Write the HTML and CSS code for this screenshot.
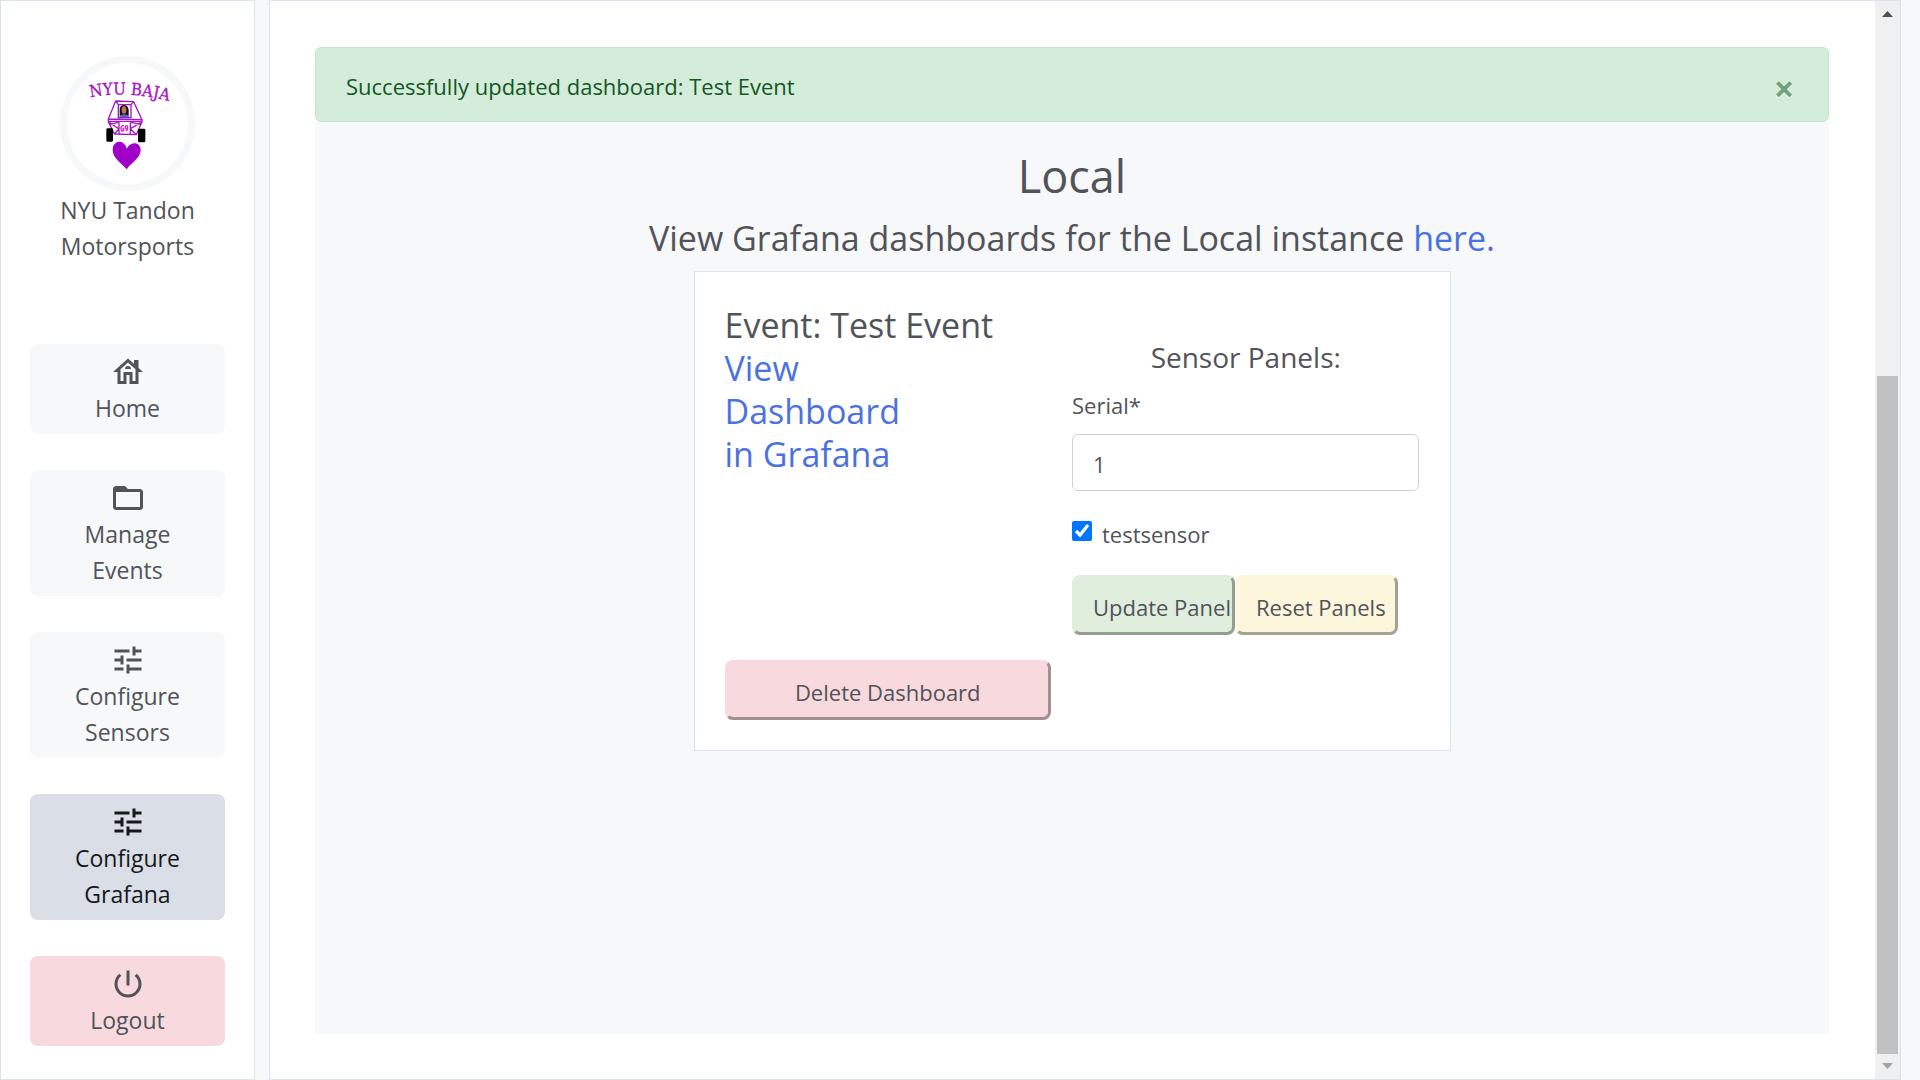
FILE: index.html
```html
<!DOCTYPE html>
<html lang="en">
<head>
<meta charset="utf-8">
<title>Configure Grafana</title>
<link rel="stylesheet" href="styles.css">
</head>
<body>
<div class="app">
  <aside class="sidebar">
    <div class="brand">
      <svg class="logo" viewBox="30 17 405 405" role="img" aria-label="NYU Baja">
        <circle cx="232.500" cy="219.500" r="192" fill="#fff" stroke="#f6f8fa" stroke-width="21"/>
        <path id="arc" d="M121 141Q235 118 370 156" fill="none"/>
        <text class="logo-text"><textPath href="#arc">NYU BAJA</textPath></text>
        <g fill="none" stroke="#a415c4" stroke-width="4" stroke-linejoin="round">
          <path d="M197 152L251 154L276 208L175 206ZM205 163H243V202H205ZM197 152L205 163M251 154L243 163M175 206V214L193 251L259 253L276 214V208M175 213H276M178 216L207 236L193 251M274 216L241 235L259 253M207 216V252M241 216V252M180 222L205 216M271 222L243 216"/>
        </g>
        <path d="M209 196V175Q211 164 222 164Q235 165 236 180V196Z" fill="#160d12"/>
        <ellipse cx="222" cy="179" rx="7" ry="11" fill="#b57955"/>
        <path d="M207 201Q211 192 222 192Q235 192 238 201Z" fill="#5663ae"/>
        <path d="M222 226Q212 224 213 236Q214 243 219 242Q224 236 217 234M233 236Q225 237 226 229Q230 223 233 229Q234 238 229 243" fill="none" stroke="#ff10bd" stroke-width="4"/>
        <rect x="169" y="234" width="20" height="40" rx="4"/>
        <rect x="264" y="235" width="22" height="41" rx="4"/>
        <path d="M230 357C214 337 188 323 188 298C188 278 207 267 222 280Q229 286 230 295Q239 280 252 279C265 279 272 287 272 300C271 324 244 337 230 357Z" fill="#a000c8"/>
      </svg>
      <div>NYU Tandon<br>Motorsports</div>
    </div>
    <nav class="nav">
      <a class="nav-item" href="#">
        <svg class="icon" viewBox="0 0 24 24"><path fill-rule="evenodd" d="M19 9.300V4h-3v2.600L12 3 2 12h3v8h6v-6h2v6h6v-8h3zM17 18h-2v-6H9v6H7v-7.810l5-4.500 5 4.500zM10 10h4q0-2-2-2t-2 2z"/></svg>
        <span>Home</span>
      </a>
      <a class="nav-item" href="#">
        <svg class="icon" viewBox="0 0 24 24"><path d="M20 6h-8l-2-2H4c-1.100 0-1.990.9-1.990 2L2 18c0 1.100.9 2 2 2h16c1.100 0 2-.9 2-2V8c0-1.100-.9-2-2-2zm0 12H4V8h16v10z"/></svg>
        <span>Manage<br>Events</span>
      </a>
      <a class="nav-item" href="#">
        <svg class="icon" viewBox="0 0 24 24"><path d="M3 17v2h6v-2H3zM3 5v2h10V5H3zm10 16v-2h8v-2h-8v-2h-2v6h2zM7 9v2H3v2h4v2h2V9H7zm14 4v-2H11v2h10zm-6-4h2V7h4V5h-4V3h-2v6z"/></svg>
        <span>Configure<br>Sensors</span>
      </a>
      <a class="nav-item active" href="#" aria-current="page">
        <svg class="icon" viewBox="0 0 24 24"><path d="M3 17v2h6v-2H3zM3 5v2h10V5H3zm10 16v-2h8v-2h-8v-2h-2v6h2zM7 9v2H3v2h4v2h2V9H7zm14 4v-2H11v2h10zm-6-4h2V7h4V5h-4V3h-2v6z"/></svg>
        <span>Configure<br>Grafana</span>
      </a>
      <a class="nav-item danger" href="#">
        <svg class="icon" viewBox="0 0 24 24"><path d="M13 3h-2v10h2V3zm4.830 2.170l-1.420 1.420C17.990 7.860 19 9.810 19 12c0 3.870-3.130 7-7 7s-7-3.130-7-7c0-2.190 1.010-4.140 2.580-5.420L6.170 5.170C4.230 6.820 3 9.260 3 12c0 4.970 4.030 9 9 9s9-4.030 9-9c0-2.740-1.230-5.180-3.170-6.830z"/></svg>
        <span>Logout</span>
      </a>
    </nav>
  </aside>

  <div class="frame">
    <main class="content">
      <div class="alert" role="alert">
        <span>Successfully updated dashboard: Test Event</span>
        <button class="close" type="button" aria-label="Close">×</button>
      </div>
      <section class="panel">
        <h1 class="title">Local</h1>
        <h2 class="heading">View Grafana dashboards for the Local instance <a href="#">here.</a></h2>
        <div class="card">
          <div class="event">
            <h2 class="heading">Event: Test Event</h2>
            <h2 class="heading"><a href="#">View<br>Dashboard<br>in Grafana</a></h2>
            <button class="btn btn-delete" type="button">Delete Dashboard</button>
          </div>
          <form class="sensors">
            <h3 class="subheading">Sensor Panels:</h3>
            <label class="field-label" for="serial">Serial*</label>
            <input class="field" id="serial" type="text" value="1">
            <div class="check">
              <input class="checkbox" id="testsensor" type="checkbox" checked>
              <label for="testsensor">testsensor</label>
            </div>
            <div class="actions">
              <button class="btn btn-update" type="button">Update Panels</button>
              <button class="btn btn-reset" type="button">Reset Panels</button>
            </div>
          </form>
        </div>
      </section>
    </main>
    <div class="scrollbar" aria-hidden="true">
      <svg class="arrow" viewBox="0 0 11 6"><path d="M0 6L5.500 0L11 6Z" fill="#505050"/></svg>
      <div class="track"><div class="thumb"></div></div>
      <svg class="arrow" viewBox="0 0 11 6"><path d="M0 0L5.500 6L11 0Z" fill="#a3a3a3"/></svg>
    </div>
  </div>
</div>
</body>
</html>
```
FILE: styles.css
```css
* {
  box-sizing: border-box;
}

body {
  margin: 0;
  background: #f6f8fa;
  color: #515359;
  font: 22px/36px "Open Sans", "Noto Sans", sans-serif;
}

a {
  color: #4b72e0;
  text-decoration: none;
}

h1,
h2,
h3 {
  margin: 0;
  font-weight: 400;
}

button,
input {
  font: inherit;
  color: inherit;
}

.app {
  display: flex;
  gap: 14px;
  min-height: 100vh;
  padding-right: 19px;
}

/* Sidebar */
.sidebar {
  flex: 0 0 255px;
  padding: 55px 29px 32px;
  background: #fff;
  border: 1px solid #dae3ee;
  font-size: 23px;
  text-align: center;
}

.brand {
  margin-bottom: 80px;
}

.logo {
  display: block;
  width: 135px;
  height: 135px;
  margin: 0 auto 1px;
}

.logo-text {
  font: 50px "DejaVu Serif Condensed", "DejaVu Serif", serif;
  fill: #a415c4;
  stroke: #a415c4;
  stroke-width: 1px;
}

.nav {
  display: flex;
  flex-direction: column;
  gap: 36px;
}

.nav-item {
  display: flex;
  flex-direction: column;
  align-items: center;
  padding: 10px 9px 8px;
  border-radius: 8px;
  background: #f6f8fa;
  color: #515359;
}

.nav-item.active {
  background: #dadee6;
  color: #16181b;
}

.nav-item.danger {
  background: #f8dade;
}

.icon {
  width: 36px;
  height: 36px;
  fill: currentColor;
}

/* Main frame */
.frame {
  flex: 1;
  display: flex;
  background: #fff;
  border: 1px solid #dae3ee;
}

.content {
  flex: 1;
  display: flex;
  flex-direction: column;
  padding: 46px 46px 45px 45px;
}

.alert {
  display: flex;
  justify-content: space-between;
  align-items: flex-start;
  height: 75px;
  padding: 20px 30px 0;
  border: 1px solid #c3e6cb;
  border-radius: 6px;
  background: #d4edda;
  color: #155724;
}

.close {
  width: 28px;
  padding: 3px 0 0;
  border: 0;
  background: none;
  font-size: 36px;
  font-weight: 700;
  opacity: .5;
  text-shadow: 0 1px 0 #fff;
}

.panel {
  flex: 1;
  padding: 25px 0;
  background: #f6f8fa;
  text-align: center;
}

.title {
  margin-bottom: 12px;
  font-size: 45px;
  line-height: 58px;
}

.heading {
  font-size: 34px;
  line-height: 43px;
}

.panel > .heading {
  margin-bottom: 11px;
}

.card {
  display: grid;
  grid-template-columns: 326fr 347fr;
  gap: 21px;
  width: 50%;
  margin: 0 auto;
  padding: 30px;
  background: #fff;
  border: 1px solid #dae3ee;
}

.event {
  display: flex;
  flex-direction: column;
  min-height: 418px;
  padding-top: 2px;
  text-align: left;
}

.sensors {
  padding-top: 37px;
  text-align: left;
}

.subheading {
  margin-bottom: 12px;
  font-size: 28px;
  line-height: 36px;
  text-align: center;
}

.field-label {
  display: block;
  margin-bottom: 11px;
}

.field {
  display: block;
  width: 100%;
  height: 57px;
  padding: 3px 20px 0;
  border: 1px solid #cdd2da;
  border-radius: 6px;
  background: #fff;
}

.check {
  display: flex;
  align-items: center;
  gap: 10px;
  margin: 25px 0 23px;
}

.checkbox {
  width: 20px;
  height: 20px;
  margin: 0 0 6px;
  accent-color: #0075ff;
}

.actions {
  display: flex;
}

.btn {
  height: 60px;
  padding: 4px 0 0;
  border: 3px solid transparent;
  border-right-color: rgba(0, 0, 0, .34);
  border-bottom-color: rgba(0, 0, 0, .34);
  border-radius: 8px;
  background-clip: border-box;
  background-origin: border-box;
  white-space: nowrap;
  overflow: hidden;
}

.btn-delete {
  margin-top: auto;
  background-color: #f8dade;
}

.btn-update,
.btn-reset {
  width: 163px;
  padding-left: 18px;
  text-align: left;
}

.btn-update {
  background-color: #e0eedd;
}

.btn-reset {
  background-color: #fcf6dc;
}

/* Scrollbar drawn beside the content */
.scrollbar {
  display: flex;
  flex-direction: column;
  align-items: center;
  width: 25px;
  padding: 10px 0;
  background: #f0f0f0;
}

.arrow {
  width: 11px;
  height: 6px;
}

.track {
  flex: 1;
  display: flex;
  flex-direction: column;
  justify-content: flex-end;
  width: 21px;
  margin: 9px 0;
}

.thumb {
  height: 66%;
  background: #c1c1c1;
}
```
